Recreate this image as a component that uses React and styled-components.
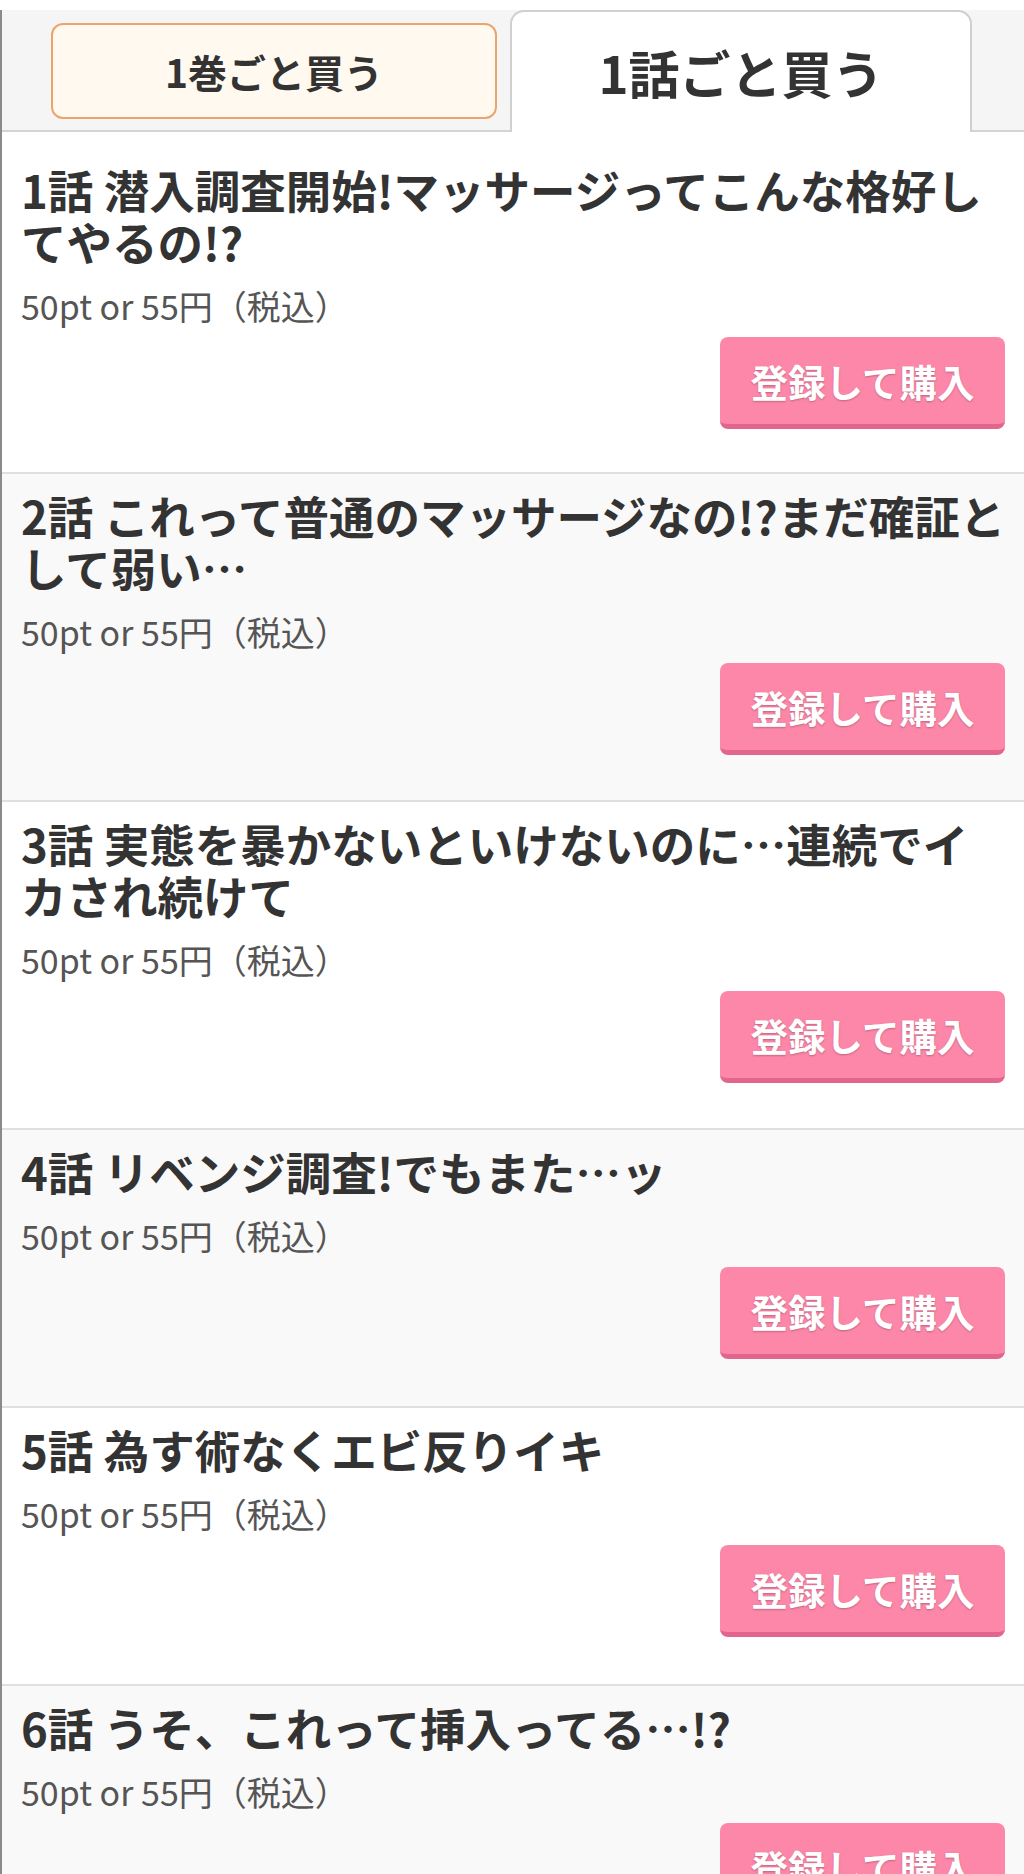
import styled, { createGlobalStyle } from "styled-components";

const GlobalStyle = createGlobalStyle`
  body {
    margin: 0;
    background: #fff;
    font-family: "Noto Sans CJK JP", "Noto Sans", sans-serif;
    color: #333;
  }
`;

const episodes = [
  { no: 1, title: "潜入調査開始!マッサージってこんな格好してやるの!?" },
  { no: 2, title: "これって普通のマッサージなの!?まだ確証として弱い…" },
  { no: 3, title: "実態を暴かないといけないのに…連続でイカされ続けて" },
  { no: 4, title: "リベンジ調査!でもまた…ッ" },
  { no: 5, title: "為す術なくエビ反りイキ" },
  { no: 6, title: "うそ、これって挿入ってる…!?" },
];

const Episode = ({ no, title, shaded }) => {
  return (
    <Item shaded={shaded}>
      <Title>
        {no}話 {title}
      </Title>
      <Price>50pt or 55円（税込）</Price>
      <Actions>
        <BuyButton>登録して購入</BuyButton>
      </Actions>
    </Item>
  );
};

const App = () => {
  return (
    <Page>
      <GlobalStyle />
      <TabBar>
        <Tab>1巻ごと買う</Tab>
        <ActiveTab>1話ごと買う</ActiveTab>
      </TabBar>
      <List>
        {episodes.map((ep, i) => (
          <Episode key={ep.no} no={ep.no} title={ep.title} shaded={i % 2 === 1} />
        ))}
      </List>
    </Page>
  );
};
export default App;

const Page = styled.div`
  width: 1024px;
  box-sizing: border-box;
  border-left: 2px solid #8a8a8a;
`;

const TabBar = styled.div`
  margin-top: 10px;
  height: 120px;
  display: flex;
  align-items: flex-end;
  padding-left: 49px;
  background-color: #f5f5f5;
  border-bottom: 2px solid #d4d4d4;
`;

const Tab = styled.div`
  box-sizing: border-box;
  width: 446px;
  height: 96px;
  margin-bottom: 11px;
  display: flex;
  align-items: center;
  justify-content: center;
  border: 2px solid #eba56b;
  border-radius: 12px;
  background-color: #fff9f0;
  font-size: 39px;
  font-weight: bold;
  color: #333;
`;

const ActiveTab = styled.div`
  box-sizing: border-box;
  width: 462px;
  height: 122px;
  margin-left: 13px;
  margin-bottom: -2px;
  display: flex;
  align-items: center;
  justify-content: center;
  border: 2px solid #d0d0d0;
  border-bottom: none;
  border-radius: 14px 14px 0 0;
  background-color: #fff;
  font-size: 51px;
  font-weight: bold;
  color: #333;
`;

const List = styled.div`
  display: flex;
  flex-direction: column;
`;

const Item = styled.div`
  box-sizing: border-box;
  min-height: 278px;
  padding: 15px 15px 45px 19px;
  background-color: ${({ shaded }) => (shaded ? "#f9f9f9" : "#fff")};
  border-bottom: 2px solid #e0e0e0;

  &:first-child {
    padding-top: 31px;
    padding-bottom: 43px;
  }
`;

const Title = styled.div`
  font-size: 45.5px;
  line-height: 52px;
  font-weight: bold;
  color: #333;
`;

const Price = styled.div`
  margin-top: 16px;
  font-size: 34px;
  line-height: 45px;
  color: #555;
`;

const Actions = styled.div`
  display: flex;
  justify-content: flex-end;
  margin-top: 9px;
  padding-right: 4px;
`;

const BuyButton = styled.button`
  box-sizing: border-box;
  width: 285px;
  height: 92px;
  padding: 0;
  border: none;
  border-bottom: 5px solid #e2658d;
  border-radius: 8px;
  background-color: #fd87a9;
  font-family: "Noto Sans CJK JP", "Noto Sans", sans-serif;
  font-size: 37.5px;
  font-weight: bold;
  color: #fff;
  text-shadow: 0 1px 2px rgba(0, 0, 0, 0.25);
`;
